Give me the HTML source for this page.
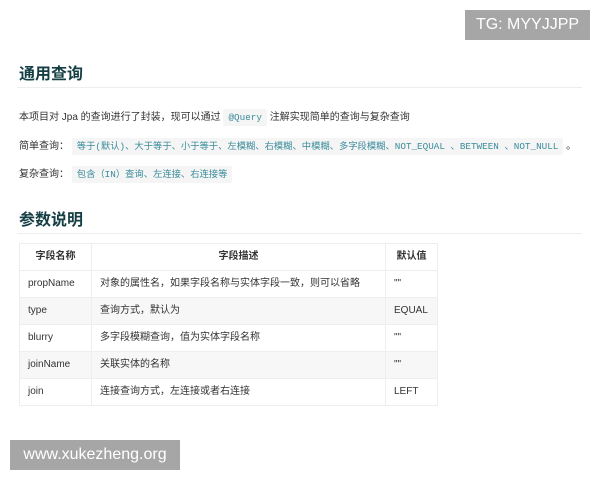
<!DOCTYPE html>
<html><head><meta charset="utf-8"><style>
body{margin:0;width:600px;height:480px;background:#fff;font-family:"Liberation Sans","Noto Sans CJK SC",sans-serif;color:#333;position:relative;overflow:hidden}
.h{position:absolute;left:19px;font-size:16px;font-weight:bold;color:#163f45;line-height:20px}
.hl{position:absolute;left:17px;width:565px;height:1px;background:#eee}
.p{position:absolute;left:19px;font-size:10px;line-height:20px;white-space:nowrap;color:#333}
code{font-family:"Liberation Mono","Noto Sans CJK SC",monospace;font-size:9.3px;color:#3a8c9a;background:#f5f5f5;padding:3px 5px;border-radius:2px}
table{position:absolute;left:19px;top:243px;border-collapse:collapse;font-size:10px}
td,th{border:1px solid #eee;height:26px;padding:0 8px;text-align:left;white-space:nowrap;vertical-align:middle;line-height:14px}
th{text-align:center;font-weight:bold;color:#333}
tr.g td{background:#f7f7f7}
.w{position:absolute;background:#a6a6a6;color:#fff;font-size:16px;line-height:30px;text-align:center}
</style></head><body>
<div class="w" style="left:465px;top:10px;width:125px">TG: MYYJJPP</div>
<div class="h" style="top:65px">通用查询</div>
<div class="hl" style="top:87px"></div>
<div class="p" style="top:108px">本项目对 Jpa 的查询进行了封装，现可以通过 <code>@Query</code> 注解实现简单的查询与复杂查询</div>
<div class="p" style="top:137px">简单查询： <code>等于(默认)、大于等于、小于等于、左模糊、右模糊、中模糊、多字段模糊、NOT_EQUAL 、BETWEEN 、NOT_NULL</code> 。</div>
<div class="p" style="top:165px">复杂查询： <code>包含（IN）查询、左连接、右连接等</code></div>
<div class="h" style="top:211px">参数说明</div>
<div class="hl" style="top:233px"></div>
<table>
<tr><th style="width:55px">字段名称</th><th style="width:277px">字段描述</th><th style="width:35px">默认值</th></tr>
<tr><td>propName</td><td>对象的属性名，如果字段名称与实体字段一致，则可以省略</td><td>""</td></tr>
<tr class="g"><td>type</td><td>查询方式，默认为</td><td>EQUAL</td></tr>
<tr><td>blurry</td><td>多字段模糊查询，值为实体字段名称</td><td>""</td></tr>
<tr class="g"><td>joinName</td><td>关联实体的名称</td><td>""</td></tr>
<tr><td>join</td><td>连接查询方式，左连接或者右连接</td><td>LEFT</td></tr>
</table>
<div class="w" style="left:10px;top:440px;width:170px">www.xukezheng.org</div>
</body></html>
